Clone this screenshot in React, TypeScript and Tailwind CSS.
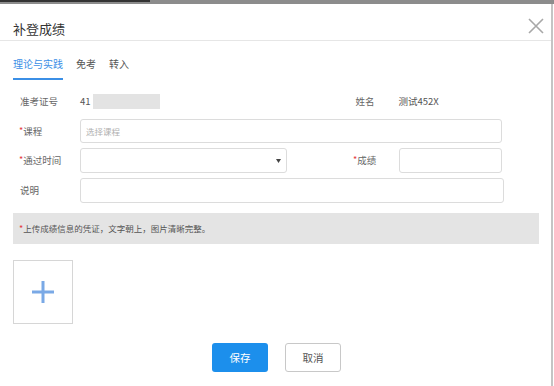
import React from "react";

const Star = () => <span className="text-[#e4393c] text-[9px] align-top">*</span>;

const tabs = ["理论与实践", "免考", "转入"];

const App = () => {
  return (
    <div className="w-[554px] h-[386px] bg-white overflow-hidden font-['Noto_Sans_CJK_SC','Noto_Sans',sans-serif] text-[#555]">
      {/* edge of the page behind the dialog */}
      <div className="h-[4px] bg-[#8c8c8c] flex">
        <div className="w-[150px] h-[2px] bg-[#333]" />
      </div>
      <div className="w-[553px] h-[382px] border-r-2 border-[#c4c4c4] flex flex-col">
        <div className="h-[37px] border-b border-[#e6e6e6] flex justify-between pl-[13px] pr-[7px]">
          <h2 className="pt-[18px] text-[13px] leading-[13px] text-[#333]">补登成绩</h2>
          <svg width="16" height="16" viewBox="0 0 16 16" className="mt-[14px]">
            <path d="M1 1 L15 15 M15 1 L1 15" stroke="#a8a8a8" strokeWidth="1.6" />
          </svg>
        </div>

        <div className="flex gap-[13px] px-[13px] mt-[17px] text-[10px] leading-[12px]">
          {tabs.map((t, i) => (
            <div
              key={t}
              className={
                i === 0
                  ? "text-[#3b8fe6] pb-[8px] border-b-2 border-[#3b8fe6]"
                  : "text-[#555] pb-[8px]"
              }
            >
              {t}
            </div>
          ))}
        </div>

        <div className="flex flex-col text-[9.5px] mt-[13px]">
          <div className="flex items-center h-[16px]">
            <span className="w-[80px] pl-[20px] text-[#666]">准考证号</span>
            <span className="text-[#555]">41</span>
            <span className="ml-[2px] w-[67px] h-[15px] bg-[#e3e3e3]" />
            <span className="ml-[196px] w-[43px] text-[#666]">姓名</span>
            <span className="text-[#555]">测试452X</span>
          </div>

          <div className="flex items-center h-[24px] mt-[10px]">
            <span className="w-[80px] pl-[19px] text-[#666]"><Star />课程</span>
            <div className="w-[422px] h-[24px] border border-[#dcdcdc] rounded-[3px] flex items-center px-[5px] text-[8.5px] text-[#b0b0b0]">
              选择课程
            </div>
          </div>

          <div className="flex items-center h-[25px] mt-[5px]">
            <span className="w-[80px] pl-[19px] text-[#666]"><Star />通过时间</span>
            <div className="w-[207px] h-[25px] border border-[#dcdcdc] rounded-[3px] flex items-center justify-end pr-[5px]">
              <svg width="5" height="4" viewBox="0 0 5 4">
                <path d="M0 0 L5 0 L2.5 4 Z" fill="#444" />
              </svg>
            </div>
            <span className="ml-[66px] w-[46px] text-[#666]"><Star />成绩</span>
            <div className="w-[103px] h-[25px] border border-[#dcdcdc] rounded-[3px]" />
          </div>

          <div className="flex items-center h-[25px] mt-[5px]">
            <span className="w-[80px] pl-[20px] text-[#666]">说明</span>
            <div className="w-[424px] h-[25px] border border-[#dcdcdc] rounded-[3px]" />
          </div>
        </div>

        <div className="mx-[13px] mt-[10px] w-[526px] h-[31px] bg-[#e4e4e4] flex items-center pl-[6px] text-[8.5px] text-[#555]">
          <Star />上传成绩信息的凭证，文字朝上，图片清晰完整。
        </div>

        <div className="ml-[13px] mt-[16px] w-[60px] h-[64px] border border-[#d6d6d6] flex items-center justify-center">
          <svg width="22" height="22" viewBox="0 0 22 22">
            <path d="M11 0 V22 M0 11 H22" stroke="#7aa9e6" strokeWidth="3" />
          </svg>
        </div>

        <div className="flex justify-center gap-[17px] mt-[19px] pl-[2px] text-[10.5px]">
          <button className="w-[56px] h-[29px] rounded-[3px] bg-[#1c8fec] text-white">保存</button>
          <button className="w-[56px] h-[29px] rounded-[3px] border border-[#c8c8c8] bg-white text-[#555]">取消</button>
        </div>
      </div>
    </div>
  );
};

export default App;
